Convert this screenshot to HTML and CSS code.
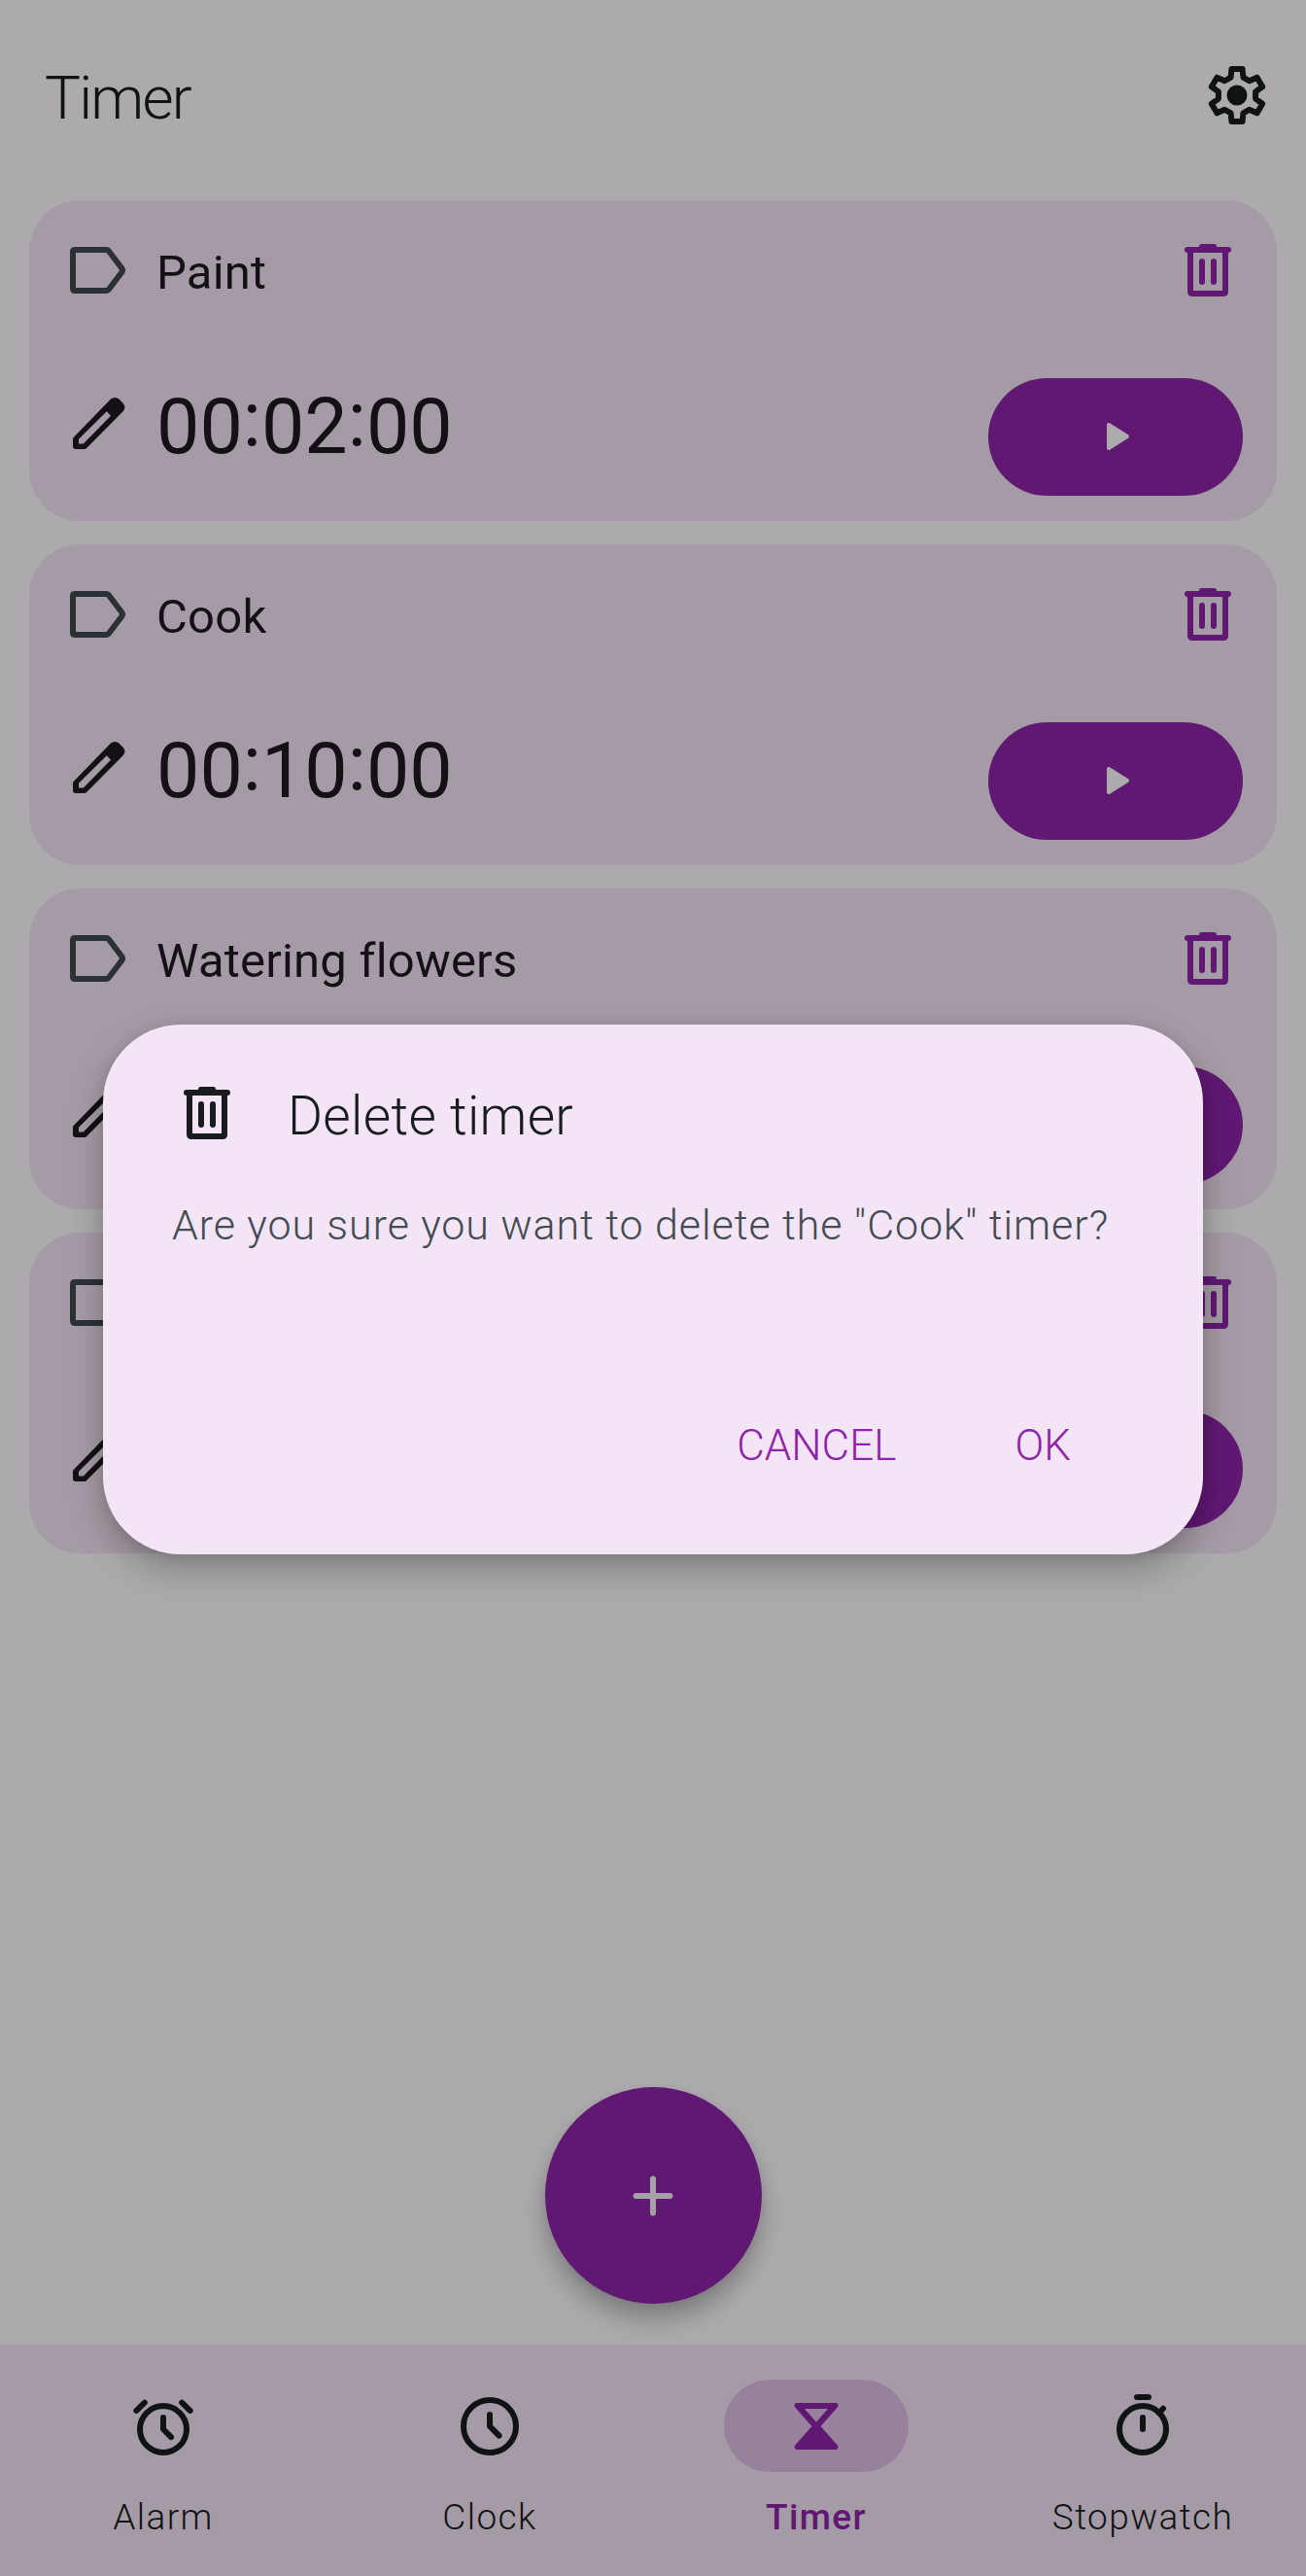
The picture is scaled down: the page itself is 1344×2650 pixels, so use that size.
FILE: index.html
```html
<!DOCTYPE html>
<html lang="en">
<head>
<meta charset="utf-8">
<title>Timer</title>
<link rel="stylesheet" href="styles.css">
</head>
<body>
<svg class="sprite" width="0" height="0" aria-hidden="true">
  <symbol id="label" viewBox="0 0 24 24"><path class="line" d="M4.700 5H15.500Q16 5 16.300 5.400L20.900 11.500Q21.200 12 20.900 12.500L16.300 18.600Q16 19 15.500 19H4.700Q4 19 4 18.300V5.700Q4 5 4.700 5Z"/></symbol>
  <symbol id="trash" viewBox="0 0 24 24"><path class="line" d="M5 5H19M6 5.500V19.300Q6 20 6.700 20H17.300Q18 20 18 19.300V5.500M10 9V16M14 9V16"/><path d="M9.800 3h4.400q.8 0 .8.8V5H9V3.800q0-.8.8-.8z"/></symbol>
  <symbol id="edit" viewBox="0 0 24 24"><path fill-rule="evenodd" d="M4 21a1 1 0 0 1-1-1v-2.400q0-.4.3-.7L16 3.850q.6-.55 1.400-.55t1.400.55l1.400 1.400q.6.6.6 1.400t-.6 1.400L7.700 20.700q-.3.3-.7.3zM5 19.200h1.600L16 9.600 14.600 8.100 5 17.600z"/></symbol>
  <symbol id="play" viewBox="0 0 24 24"><path class="thin" d="M8.500 6V18L18 12Z"/></symbol>
  <symbol id="gear" viewBox="0 0 24 24"><g transform="translate(12 12)"><path class="line" d="M-2.150-6.100L-1.850-9H1.850L2.150-6.100L4.210-4.910L6.870-6.100L8.720-2.900L6.360-1.190V1.190L8.720 2.900L6.870 6.100L4.210 4.910L2.150 6.100L1.850 9H-1.850L-2.150 6.100L-4.210 4.910L-6.870 6.100L-8.720 2.900L-6.360 1.190V-1.190L-8.720-2.900L-6.870-6.100L-4.210-4.910Z"/><circle r="3.500"/></g></symbol>
  <symbol id="plus" viewBox="0 0 24 24"><path class="line" d="M12 6.200V17.800M6.200 12H17.800"/></symbol>
  <symbol id="alarm" viewBox="0 0 24 24"><path class="line" d="M12 9V13L14.700 15.700M2.800 6.600L5.600 3.900M21.200 6.600L18.400 3.900"/><circle class="line" cx="12" cy="13" r="8"/></symbol>
  <symbol id="clock" viewBox="0 0 24 24"><path class="line" d="M12 8V12L15.200 15.200"/><circle class="line" cx="12" cy="12" r="9"/></symbol>
  <symbol id="hourglass" viewBox="0 0 24 24"><path fill-rule="evenodd" d="M5.300 4h13.400q.8 0 .8.8 0 .4-.3.800L13.500 12l5.700 6.400q.3.400.3.800 0 .8-.8.8H5.300q-.8 0-.8-.8 0-.4.3-.8L10.500 12 4.800 5.600q-.3-.4-.3-.8 0-.8.8-.8zM8 6l4 4.600L16 6z"/></symbol>
  <symbol id="stopwatch" viewBox="0 0 24 24"><path class="line" d="M10 2H14M12 9V13M17.600 7.400L19 5.900"/><circle class="line" cx="12" cy="13" r="8"/></symbol>
</svg>

<div class="screen">
  <header class="topbar">
    <h1>Timer</h1>
    <svg class="icon"><use href="#gear"/></svg>
  </header>

  <main class="timers">
    <section class="card">
      <div class="row">
        <svg class="icon tag"><use href="#label"/></svg>
        <h2>Paint</h2>
        <svg class="icon remove"><use href="#trash"/></svg>
      </div>
      <div class="row">
        <svg class="icon pencil"><use href="#edit"/></svg>
        <p class="time">00<i>:</i>02<i>:</i>00</p>
        <button class="start"><svg><use href="#play"/></svg></button>
      </div>
    </section>
    <section class="card">
      <div class="row">
        <svg class="icon tag"><use href="#label"/></svg>
        <h2>Cook</h2>
        <svg class="icon remove"><use href="#trash"/></svg>
      </div>
      <div class="row">
        <svg class="icon pencil"><use href="#edit"/></svg>
        <p class="time">00<i>:</i>10<i>:</i>00</p>
        <button class="start"><svg><use href="#play"/></svg></button>
      </div>
    </section>
    <section class="card">
      <div class="row">
        <svg class="icon tag"><use href="#label"/></svg>
        <h2>Watering flowers</h2>
        <svg class="icon remove"><use href="#trash"/></svg>
      </div>
      <div class="row">
        <svg class="icon pencil"><use href="#edit"/></svg>
        <button class="start"></button>
      </div>
    </section>
    <section class="card">
      <div class="row">
        <svg class="icon tag"><use href="#label"/></svg>
        <svg class="icon remove"><use href="#trash"/></svg>
      </div>
      <div class="row">
        <svg class="icon pencil"><use href="#edit"/></svg>
        <button class="start"></button>
      </div>
    </section>
  </main>

  <button class="fab"><svg class="icon"><use href="#plus"/></svg></button>

  <nav class="tabs">
    <a class="tab"><span class="pill"><svg class="icon"><use href="#alarm"/></svg></span><span>Alarm</span></a>
    <a class="tab"><span class="pill"><svg class="icon"><use href="#clock"/></svg></span><span>Clock</span></a>
    <a class="tab active"><span class="pill"><svg class="icon"><use href="#hourglass"/></svg></span><span>Timer</span></a>
    <a class="tab"><span class="pill"><svg class="icon"><use href="#stopwatch"/></svg></span><span>Stopwatch</span></a>
  </nav>
</div>

<div class="scrim">
  <div class="dialog">
    <div class="dialog-title">
      <svg class="icon"><use href="#trash"/></svg>
      <h2>Delete timer</h2>
    </div>
    <p>Are you sure you want to delete the "Cook" timer?</p>
    <div class="actions">
      <button>CANCEL</button>
      <button>OK</button>
    </div>
  </div>
</div>
</body>
</html>
```
FILE: styles.css
```css
* {
  box-sizing: border-box;
  margin: 0;
  padding: 0;
}

body {
  position: relative;
  width: 1344px;
  height: 2650px;
  overflow: hidden;
  font-family: Roboto, "Noto Sans", sans-serif;
  color: #191c1e;
}

button {
  border: 0;
  background: none;
  color: inherit;
  font: inherit;
  letter-spacing: inherit;
}

.sprite {
  position: absolute;
}

.icon {
  display: block;
  flex: none;
  width: 72px;
  height: 72px;
  fill: currentColor;
}

.line {
  fill: none;
  stroke: currentColor;
  stroke-width: 2;
  stroke-linecap: round;
  stroke-linejoin: round;
}

.thin {
  stroke: currentColor;
  stroke-width: 2;
  stroke-linejoin: round;
}

.screen {
  display: flex;
  flex-direction: column;
  height: 100%;
  background: #fefbfe;
}

.topbar {
  display: flex;
  align-items: center;
  justify-content: space-between;
  height: 206px;
  padding: 0 35.5px 10px 46px;
}

.topbar h1 {
  font-size: 62px;
  font-weight: 300;
  line-height: 72px;
  letter-spacing: -1.8px;
  padding-top: 6px;
}

.timers {
  display: flex;
  flex: 1;
  flex-direction: column;
  gap: 24px;
  padding: 0 30px;
}

.card {
  display: flex;
  flex-direction: column;
  justify-content: space-between;
  height: 330px;
  padding: 35.5px 35px 26px 33px;
  border-radius: 52px;
  background: #f3e5f5;
  color: #1e1920;
}

.row {
  display: flex;
  align-items: center;
}

.tag {
  color: #42494e;
  margin-right: 26px;
}

.card h2 {
  font-size: 49px;
  font-weight: 400;
  line-height: 67px;
  padding-top: 5px;
  letter-spacing: .2px;
}

.remove {
  margin-left: auto;
  color: #8e24aa;
}

.pencil {
  align-self: flex-start;
  margin: 10px 23px 0 3px;
}

.time {
  font-size: 79px;
  line-height: 96px;
  padding-bottom: 22px;
}

.time i {
  position: relative;
  top: -7px;
  font-style: normal;
}

.start {
  display: flex;
  align-items: center;
  justify-content: center;
  width: 262px;
  height: 121px;
  margin-left: auto;
  border-radius: 61px;
  background: #8e24aa;
  color: #fdfbfe;
}

.start svg {
  width: 48px;
  height: 48px;
  margin-bottom: 1px;
  fill: currentColor;
}

.fab {
  display: flex;
  align-items: center;
  justify-content: center;
  align-self: center;
  width: 223px;
  height: 223px;
  margin-bottom: 42px;
  border-radius: 50%;
  background: #8e24aa;
  color: #f3eff4;
  box-shadow: 0 16px 26px rgba(0, 0, 0, .26), 0 2px 10px rgba(0, 0, 0, .06);
}

.tabs {
  display: flex;
  height: 238px;
  padding-top: 36px;
  background: #f3e5f5;
}

.tab {
  display: flex;
  flex: 1;
  flex-direction: column;
  align-items: center;
  gap: 25px;
  font-size: 37px;
  font-weight: 300;
  line-height: 44px;
  letter-spacing: 1.4px;
}

.pill {
  display: flex;
  align-items: center;
  justify-content: center;
  width: 190px;
  height: 95px;
  border-radius: 48px;
}

.active {
  color: #8e24aa;
  font-weight: 500;
}

.active .pill {
  background: #e1bee7;
}

.scrim {
  position: absolute;
  inset: 0;
  display: flex;
  align-items: center;
  justify-content: center;
  padding-top: 3px;
  background: rgba(0, 0, 0, .32);
}

.dialog {
  display: flex;
  flex-direction: column;
  width: 1132px;
  height: 545px;
  padding: 54.5px 71px 82px 71px;
  border-radius: 80px;
  background: #f3e5f5;
  box-shadow: 0 16px 36px rgba(0, 0, 0, .24), 0 2px 14px rgba(0, 0, 0, .1);
}

.dialog-title {
  display: flex;
  align-items: flex-start;
  gap: 47px;
}

.dialog-title h2 {
  font-size: 55px;
  font-weight: 300;
  line-height: 72px;
  padding-top: 3px;
  letter-spacing: .3px;
}

.dialog p {
  margin-top: 46px;
  font-size: 43px;
  font-weight: 300;
  line-height: 60px;
  letter-spacing: .92px;
  color: #434b53;
  white-space: nowrap;
}

.actions {
  display: flex;
  justify-content: flex-end;
  gap: 122px;
  margin-top: auto;
  padding-right: 65px;
  color: #8e24aa;
  font-size: 44px;
  font-weight: 300;
  line-height: 60px;
}
```
